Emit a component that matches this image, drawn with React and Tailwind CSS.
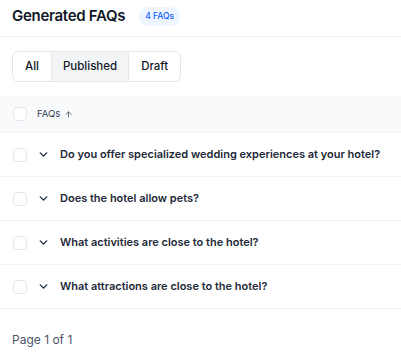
import React from 'react';
import { ChevronDown, ArrowUp } from 'lucide-react';

const faqs = [
  'Do you offer specialized wedding experiences at your hotel?',
  'Does the hotel allow pets?',
  'What activities are close to the hotel?',
  'What attractions are close to the hotel?',
];

const Checkbox = () => (
  <div className="h-[14px] w-[14px] shrink-0 rounded-[4px] border border-gray-200 bg-white"></div>
);

export default function App() {
  return (
    <div className="w-[401px] h-[360px] bg-white text-gray-900 font-['Inter',sans-serif]">
      {/* Header */}
      <div className="flex items-center gap-[14px] h-[37px] px-3 border-b border-gray-100">
        <h1 className="text-[15px] font-semibold tracking-[-0.3px] -mt-[3px]">Generated FAQs</h1>
        <span className="rounded-full bg-blue-50 px-[6px] py-[3px] text-[8.5px] font-medium text-blue-600 -mt-[3px]">4 FAQs</span>
      </div>

      {/* Tabs */}
      <div className="px-3 pt-[14px] pb-[14px]">
        <div className="inline-flex h-[31px] rounded-[6px] border border-gray-200 text-[11.5px] font-medium text-gray-900">
          <button className="px-[12px]">All</button>
          <button className="px-[11px] bg-gray-100 border-x border-gray-200">Published</button>
          <button className="px-[12px]">Draft</button>
        </div>
      </div>

      {/* Table */}
      <div>
        <div className="flex items-center gap-[10px] h-[37px] px-[13px] bg-gray-50 border-b border-gray-100">
          <Checkbox />
          <span className="flex items-center gap-1 text-[9.5px] text-gray-700">
            FAQs <ArrowUp className="h-[9px] w-[9px]" strokeWidth={2} />
          </span>
        </div>
        {faqs.map((q) => (
          <div key={q} className="flex items-center h-[44px] px-[13px] border-b border-gray-100">
            <Checkbox />
            <ChevronDown className="ml-[10px] h-[13px] w-[13px] text-gray-800" strokeWidth={2.5} />
            <span className="ml-[10px] text-[11px] font-semibold text-gray-800 whitespace-nowrap">{q}</span>
          </div>
        ))}
      </div>

      <div className="px-3 pt-[22px] text-[12px] text-gray-600">Page 1 of 1</div>
    </div>
  );
}
